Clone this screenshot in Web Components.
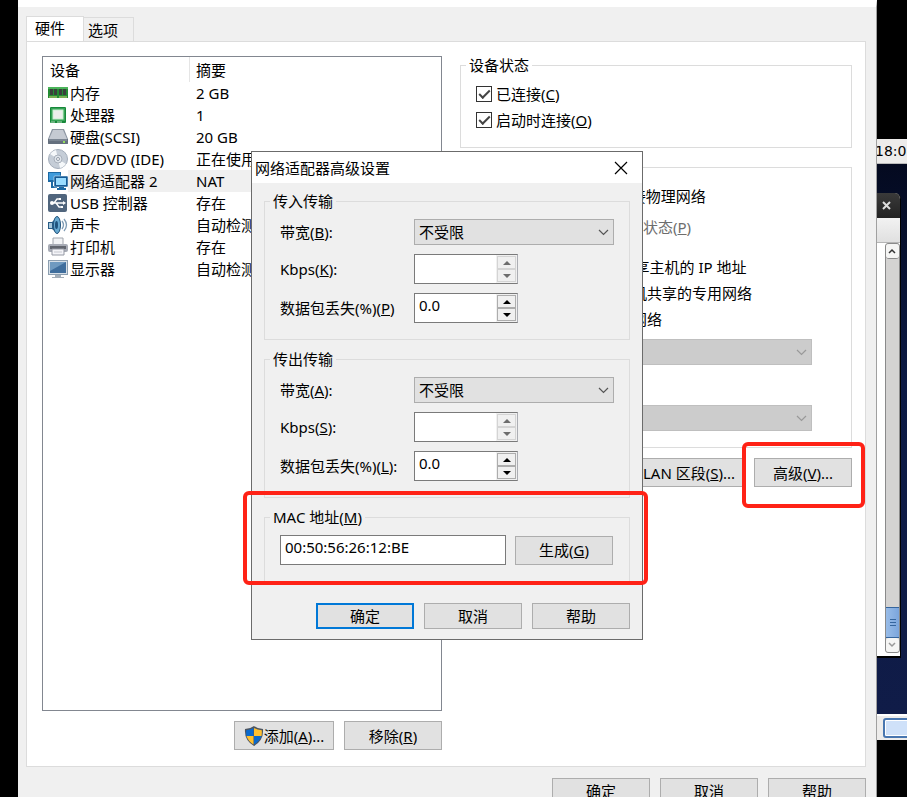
<!DOCTYPE html>
<html lang="zh-CN">
<head>
<meta charset="utf-8">
<title>虚拟机设置</title>
<style>
  html, body { height: 100%; }
  body {
    margin: 0;
    overflow: hidden;
    background: #000;
    color: #000;
    font: 15px/22px "Noto Sans", "Noto Sans CJK SC", sans-serif;
    display: grid;
    grid-template-columns: minmax(0, 1fr) 30px;
    grid-template-rows: 100vh;
    padding-left: 18px;
    box-sizing: border-box;
  }
  /* floats over the settings window */
  advanced-dialog { position: absolute; left: 251px; top: 151px; }
</style>
</head>
<body>
<settings-window></settings-window>
<guest-desktop></guest-desktop>
<advanced-dialog></advanced-dialog>

<script>
class BaseElement extends HTMLElement {
  constructor() {
    super();
    const template = document.createElement("template");
    template.innerHTML = this.constructor.markup;
    this.attachShadow({ mode: "open" });
    this.shadowRoot.appendChild(template.content.cloneNode(true));
  }

  $(selector) {
    return this.shadowRoot.querySelector(selector);
  }
}

class PushButton extends BaseElement {
  static get markup() {
    return `
    <style>
      :host { display: block; width: 98px; height: 29px; }
      button {
        display: flex;
        align-items: center;
        justify-content: center;
        width: 100%;
        height: 100%;
        padding: 0;
        border: 1px solid #adadad;
        background: #e1e1e1;
        color: inherit;
        font: inherit;
        white-space: nowrap;
      }
      :host([default]) button { border: 2px solid #0078d7; }
    </style>
    <button type="button"><slot></slot></button>`;
  }
}
customElements.define("push-button", PushButton);

class GroupBox extends BaseElement {
  static get markup() {
    return `
    <style>
      :host { display: block; position: relative; }
      fieldset {
        margin: 0;
        min-width: 0;
        border: 1px solid #dcdcdc;
        padding: 9px 15px 16px;
      }
      legend { margin-left: -10px; padding: 0 3px; line-height: 18px; }
    </style>
    <fieldset>
      <legend><slot name="legend"></slot></legend>
      <slot></slot>
    </fieldset>`;
  }
}
customElements.define("group-box", GroupBox);

// red frame drawn round the element it sits in
class CalloutFrame extends BaseElement {
  static get markup() {
    return `
    <style>
      :host {
        display: block;
        position: absolute;
        inset: -16px -13px -21px -12px;
        border: 4px solid #ff2216;
        border-radius: 6px;
        pointer-events: none;
        z-index: 2;
      }
      :host([wide]) { inset: -17px -18px -3px -21px; }
    </style>`;
  }
}
customElements.define("callout-frame", CalloutFrame);

class ChoiceRow extends BaseElement {
  static get markup() {
    return `
    <style>
      :host { display: flex; align-items: center; height: 22px; white-space: nowrap; }
      input {
        appearance: none;
        box-sizing: border-box;
        flex: none;
        width: 16px;
        height: 16px;
        margin: 0 4px 0 0;
        border: 1px solid #333;
        background: #fff;
        display: grid;
        place-items: center;
      }
      input[type=radio] { margin-right: 7px; border-radius: 50%; }
      input[type=checkbox]:checked::after {
        content: "";
        box-sizing: border-box;
        width: 11px;
        height: 6px;
        border: solid #444;
        border-width: 0 0 2px 2px;
        transform: translateY(-1px) rotate(-45deg);
      }
      input[type=radio]:checked::after {
        content: "";
        width: 8px;
        height: 8px;
        border-radius: 50%;
        background: #333;
      }
      :host([disabled]) { color: #6d6d6d; }
      :host([disabled]) input { border-color: #ccc; }
    </style>
    <input id="choice"><label for="choice"><slot></slot></label>`;
  }

  connectedCallback() {
    const input = this.$("input");
    input.type = this.getAttribute("type") || "checkbox";
    input.checked = this.hasAttribute("checked");
    input.disabled = this.hasAttribute("disabled");
  }
}
customElements.define("choice-row", ChoiceRow);

class SelectField extends BaseElement {
  static get markup() {
    return `
    <style>
      :host { display: grid; grid-template-columns: 134px minmax(0, 1fr); align-items: center; }
      :host([bare]) { grid-template-columns: minmax(0, 1fr); }
      :host([bare]) label { display: none; }
      .box { display: grid; align-items: center; }
      select, svg { grid-area: 1 / 1; }
      select {
        appearance: none;
        width: 100%;
        height: 26px;
        padding: 0 4px;
        border: 1px solid #adadad;
        border-radius: 0;
        background: #e1e1e1;
        color: inherit;
        font: inherit;
      }
      svg { justify-self: end; margin-right: 5px; pointer-events: none; stroke: #555; }
      select:disabled { background: #ccc; border-color: #bfbfbf; opacity: 1; }
      select:disabled + svg { stroke: #999; }
    </style>
    <label for="select"><slot></slot></label>
    <div class="box">
      <select id="select"><option></option></select>
      <svg width="11" height="7" fill="none" stroke-width="1.2"><path d="M1 1l4.500 4.500L10 1"/></svg>
    </div>`;
  }

  connectedCallback() {
    this.$("option").textContent = this.getAttribute("value") || "";
    this.$("select").disabled = this.hasAttribute("disabled");
    if (this.hasAttribute("bare")) {
      this.$("select").setAttribute("aria-label", this.getAttribute("bare"));
    }
  }
}
customElements.define("select-field", SelectField);

class SpinField extends BaseElement {
  static get markup() {
    return `
    <style>
      :host { display: grid; grid-template-columns: 134px minmax(0, 1fr); align-items: center; }
      label { white-space: nowrap; }
      .box {
        display: grid;
        grid-template-columns: 1fr 21px;
        box-sizing: border-box;
        width: 104px;
        height: 30px;
        border: 1px solid #7a7a7a;
        border-right-color: #abadb3;
        background: #fff;
      }
      input {
        min-width: 0;
        border: 0;
        padding: 0 4px 6px;
        background: none;
        color: inherit;
        font: inherit;
        outline: 0;
      }
      .arrows { display: grid; grid-template-rows: 1fr 1fr; padding: 1px; background: #f0f0f0; }
      button {
        display: grid;
        place-items: center;
        min-height: 0;
        padding: 0;
        border: 1px solid #adadad;
        background: #f0f0f0;
        color: #000;
      }
      button:disabled { border-color: #d4d4d4; color: #6d6d6d; }
      svg { display: block; fill: currentColor; }
    </style>
    <label for="number"><slot></slot></label>
    <div class="box">
      <input id="number" type="text">
      <div class="arrows">
        <button type="button" aria-label="增加"><svg width="8" height="4"><path d="M0 4L4 0l4 4z"/></svg></button>
        <button type="button" aria-label="减少"><svg width="8" height="4"><path d="M0 0l4 4 4-4z"/></svg></button>
      </div>
    </div>`;
  }

  connectedCallback() {
    this.$("input").value = this.getAttribute("value") || "";
    this.shadowRoot.querySelectorAll("input, button").forEach(node => {
      node.disabled = this.hasAttribute("disabled");
    });
  }
}
customElements.define("spin-field", SpinField);

const ICONS = {
  memory: `<path d="M0 4h20v11H0z" fill="#238b33"/><path d="M0 4h20v2H0z" fill="#4bb35a"/>
    <path d="M2 6h3v6H2zM6 6h3v6H6zM11 6h3v6h-3zM15 6h3v6h-3z" fill="#3a403c"/>
    <path d="M1 13h8v2H1zM11 13h8v2h-8z" fill="#d6cf7a"/><path d="M2 13v2m2-2v2m2-2v2m2-2v2m4-2v2m2-2v2m2-2v2m2-2v2" stroke="#238b33"/>`,
  cpu: `<rect x="2" y="2" width="16" height="16" rx="1" fill="#17883a"/><rect x="3" y="3" width="14" height="13" fill="#36a356"/>
    <rect x="5" y="5" width="10" height="9" fill="#eceeec" stroke="#c8f0d0"/><path d="M3 17h4M9 17h5" stroke="#b9dfc0"/>`,
  disk: `<path d="M4 2h12l4 10v5H0v-5z" fill="#8c95a1"/><path d="M5 3h10l4 9H1z" fill="#c5cad2"/>
    <path d="M0 12h20v4q0 1-1 1H1q-1 0-1-1z" fill="#65707e"/><path d="M1 13h18" stroke="#929ba6"/><path d="M16 14v2" stroke="#95e05e" stroke-width="2"/>`,
  disc: `<circle cx="10" cy="10" r="9.500" fill="#c5cdd7" stroke="#a3adba"/><path d="M10 10L2 5a10 10 0 0 1 6-4zM10 10l8 5a10 10 0 0 1-6 4z" fill="#f5f8fa"/>
    <circle cx="10" cy="10" r="4" fill="#dfe5eb" stroke="#a8b0bb"/><circle cx="10" cy="10" r="1.500" fill="#fff" stroke="#929ca9"/>`,
  network: `<path d="M0 1h13v10H0z" fill="#1c69a4"/><path d="M1 2h11v7H1z" fill="#3f9bdb"/><path d="M4 10v6h5" stroke="#1c69a4" stroke-width="2" fill="none"/>
    <rect x="6" y="5" width="14" height="11" rx="1" fill="#155b96" stroke="#fff" stroke-width=".5"/><path d="M8 7h10v7H8z" fill="#9adcff"/><path d="M11 16h5v1h2v2H9v-2h2z" fill="#1c69a4"/>`,
  usb: `<rect x="0" y="1" width="19" height="18" rx="2" fill="#50657d"/><path d="M3 10h13M6 10l3-4h3M8 10l3 4h3" stroke="#fff" stroke-width="1.300" fill="none"/>
    <circle cx="4" cy="10" r="2" fill="#fff"/><path d="M15 8l3 2-3 2zM11 5h2v2h-2zM13 13h2v2h-2z" fill="#fff"/>`,
  sound: `<path d="M0 7h4l6-6v18l-6-5H0z" fill="#285c86"/><path d="M1 8h3v5H1z" fill="#a8c8dc"/><ellipse cx="9" cy="10" rx="3.500" ry="8.500" fill="#67a9d1" stroke="#24557d"/>
    <ellipse cx="8.500" cy="10" rx="1.500" ry="4" fill="#1f527c"/><path d="M14 6q3 4 0 8M16 4q5 6 0 12" stroke="#7f9cb5" stroke-width="1.300" fill="none"/>`,
  printer: `<path d="M5 1h10v7H5z" fill="#f3f4f6" stroke="#a2a6ae"/><rect x="0" y="7" width="20" height="8" rx="2" fill="#a7abb5"/>
    <path d="M2 9h16v3H2z" fill="#62666f"/><path d="M4 12h12v6H4z" fill="#f4f4f8" stroke="#9599a4"/><path d="M6 15h8" stroke="#c6c8cf"/>`,
  display: `<path d="M0 1h20v15H0z" fill="#8b9eb0"/><path d="M1 2h18v13H1z" fill="#d7e0e8"/><path d="M2 3h16v11H2z" fill="#3f6e9d"/>
    <path d="M2 3h16L2 12z" fill="#6f9ac0"/><path d="M7 16h6v2h3v1H4v-1h3z" fill="#a2adb8"/>`
};

const DEVICES = [
  ["memory", "内存", "2 GB"],
  ["cpu", "处理器", "1"],
  ["disk", "硬盘(SCSI)", "20 GB"],
  ["disc", "CD/DVD (IDE)", "正在使用"],
  ["network", "网络适配器 2", "NAT"],
  ["usb", "USB 控制器", "存在"],
  ["sound", "声卡", "自动检测"],
  ["printer", "打印机", "存在"],
  ["display", "显示器", "自动检测"]
];

class DeviceList extends BaseElement {
  static get markup() {
    return `
    <style>
      :host { display: block; border: 1px solid #828790; background: #fff; padding-left: 5px; }
      table { width: 100%; border-collapse: collapse; table-layout: fixed; }
      th { height: 25px; padding: 0 0 0 6px; text-align: left; font-weight: 400; }
      th:first-child { padding-left: 2px; background: linear-gradient(#e5e5e5, #e5e5e5) right / 1px 100% no-repeat; }
      td { height: 22px; padding: 0; white-space: nowrap; overflow: hidden; }
      td:last-child { padding-left: 6px; }
      td.name { padding-left: 2px; }
      .selected td:not(.icon) { background: #f0f0f0; }
      svg { display: block; }
    </style>
    <table>
      <colgroup><col style="width:20px"><col style="width:122px"><col></colgroup>
      <thead><tr><th colspan="2">设备</th><th>摘要</th></tr></thead>
      <tbody></tbody>
    </table>`;
  }

  connectedCallback() {
    this.$("tbody").innerHTML = DEVICES.map(([icon, name, summary]) => `
      <tr class="${icon === "network" ? "selected" : ""}">
        <td class="icon"><svg width="20" height="20" viewBox="0 0 20 20">${ICONS[icon]}</svg></td>
        <td class="name">${name}</td>
        <td>${summary}</td>
      </tr>`).join("");
  }
}
customElements.define("device-list", DeviceList);

class SettingsWindow extends BaseElement {
  static get markup() {
    return `
    <style>
      /* the button bar runs off the bottom of the screen */
      :host {
        display: flex;
        flex-direction: column;
        box-sizing: border-box;
        height: calc(100vh + 21px);
        padding: 9px 10px 14px 8px;
        border-top: 7px solid #fff;
        border-right: 1px solid #a0a0a0;
        background: #f0f0f0;
      }
      .tabs { display: flex; align-items: flex-end; margin-bottom: -1px; }
      .tabs button {
        box-sizing: border-box;
        height: 24px;
        margin-bottom: 1px;
        padding: 0 15px 0 4px;
        border: 1px solid #dcdcdc;
        border-left: 0;
        border-bottom: 0;
        background: #f0f0f0;
        color: inherit;
        font: inherit;
        line-height: 22px;
      }
      .tabs .active {
        height: 26px;
        margin-bottom: 0;
        padding: 0 18px 4px 8px;
        border-left: 1px solid #dcdcdc;
        background: #fff;
      }
      .page {
        flex: 1;
        display: grid;
        grid-template-columns: minmax(0, 400fr) minmax(0, 392fr);
        gap: 18px;
        padding: 14px 13px 16px 15px;
        border: 1px solid #dcdcdc;
        background: #fff;
      }
      .left, .right, .stack { display: flex; flex-direction: column; }
      .left, .right { gap: 10px; }
      device-list { flex: 1; }
      .buttons { display: flex; justify-content: flex-end; gap: 10px; }
      .add { width: 100px; }
      .segments { width: 110px; }
      .advanced { position: relative; }
      .stack { gap: 4px; }
      .hosted { margin-top: 18px; }
      .bridged, .custom { gap: 9px; }
      .custom { margin: 9px 24px 0 38px; }
      .custom choice-row { margin-left: -38px; }
      .sub { margin-left: 27px; }
      .footer { display: flex; justify-content: flex-end; gap: 10px; padding-top: 11px; }
      .footer push-button { height: 26px; }
    </style>
    <div class="tabs" role="tablist">
      <button type="button" role="tab" class="active" aria-selected="true">硬件</button>
      <button type="button" role="tab">选项</button>
    </div>
    <div class="page">
      <div class="left">
        <device-list></device-list>
        <div class="buttons">
          <push-button class="add">
            <svg width="20" height="20" viewBox="0 0 20 20">
              <path d="M10 0Q14 3 19 3Q20 14 10 20Q0 14 1 3Q6 3 10 0z" fill="#4d5560"/>
              <path d="M9.500 2v8H2.500Q2 7 2.200 4.300Q6 4 9.500 2zM10 10h7.500Q16 15 10 18.500z" fill="#0a69cd"/>
              <path d="M10 2q3.500 2 7.800 2.300Q18 7 17.500 10H10zM2.500 10h7v8.500Q4 15 2.500 10z" fill="#ffc02f"/>
            </svg>添加(<u>A</u>)...</push-button>
          <push-button>移除(<u>R</u>)</push-button>
        </div>
      </div>
      <div class="right">
        <group-box>
          <span slot="legend">设备状态</span>
          <div class="stack">
            <choice-row checked>已连接(<u>C</u>)</choice-row>
            <choice-row checked>启动时连接(<u>O</u>)</choice-row>
          </div>
        </group-box>
        <group-box>
          <span slot="legend">网络连接</span>
          <div class="stack bridged">
            <choice-row type="radio">桥接模式(<u>B</u>): 直接连接物理网络</choice-row>
            <choice-row class="sub" disabled>复制物理网络连接状态(<u>P</u>)</choice-row>
          </div>
          <div class="stack hosted">
            <choice-row type="radio" checked>NAT 模式(<u>N</u>): 用于共享主机的 IP 地址</choice-row>
            <choice-row type="radio">仅主机模式(<u>H</u>): 与主机共享的专用网络</choice-row>
            <choice-row type="radio">自定义(<u>U</u>): 特定虚拟网络</choice-row>
          </div>
          <div class="stack custom">
            <select-field bare="特定虚拟网络" disabled></select-field>
            <choice-row type="radio">LAN 区段(<u>L</u>):</choice-row>
            <select-field bare="LAN 区段" disabled></select-field>
          </div>
        </group-box>
        <div class="buttons">
          <push-button class="segments">LAN 区段(<u>S</u>)...</push-button>
          <push-button class="advanced">高级(<u>V</u>)...</push-button>
        </div>
      </div>
    </div>
    <div class="footer">
      <push-button>确定</push-button>
      <push-button>取消</push-button>
      <push-button>帮助</push-button>
    </div>`;
  }

  connectedCallback() {
    const frame = document.createElement("callout-frame");
    this.$(".advanced").shadowRoot.appendChild(frame);
  }
}
customElements.define("settings-window", SettingsWindow);

class AdvancedDialog extends BaseElement {
  static get markup() {
    return `
    <style>
      :host {
        display: block;
        box-sizing: border-box;
        width: 392px;
        border: 1px solid #6b6b6b;
        background: #f0f0f0;
      }
      header {
        display: flex;
        align-items: center;
        justify-content: space-between;
        height: 31px;
        padding: 0 14px 0 3px;
        background: #fff;
      }
      header button { padding: 0; border: 0; background: none; }
      header svg { display: block; stroke: #000; }
      .body { display: flex; flex-direction: column; gap: 10px; padding: 9px 12px 10px; }
      .fields { display: grid; gap: 9px; }
      .mac { display: flex; align-items: center; gap: 9px; padding-right: 1px; }
      .mac input {
        box-sizing: border-box;
        flex: 1;
        min-width: 0;
        height: 30px;
        padding: 0 4px 6px;
        border: 1px solid #7a7a7a;
        background: #fff;
        font: inherit;
      }
      footer { display: flex; justify-content: flex-end; gap: 10px; padding-top: 11px; }
      footer push-button { height: 26px; }
    </style>
    <header>
      <span>网络适配器高级设置</span>
      <button type="button" aria-label="关闭"><svg width="14" height="14" stroke-width="1.200"><path d="M1 1l12 12M13 1L1 13"/></svg></button>
    </header>
    <div class="body">
      <group-box>
        <span slot="legend">传入传输</span>
        <div class="fields">
          <select-field value="不受限">带宽(<u>B</u>):</select-field>
          <spin-field disabled>Kbps(<u>K</u>):</spin-field>
          <spin-field value="0.0">数据包丢失(%)(<u>P</u>)</spin-field>
        </div>
      </group-box>
      <group-box>
        <span slot="legend">传出传输</span>
        <div class="fields">
          <select-field value="不受限">带宽(<u>A</u>):</select-field>
          <spin-field disabled>Kbps(<u>S</u>):</spin-field>
          <spin-field value="0.0">数据包丢失(%)(<u>L</u>):</spin-field>
        </div>
      </group-box>
      <group-box>
        <label slot="legend" for="mac">MAC 地址(<u>M</u>)</label>
        <div class="mac">
          <input id="mac" type="text" value="00:50:56:26:12:BE">
          <push-button>生成(<u>G</u>)</push-button>
        </div>
        <callout-frame wide></callout-frame>
      </group-box>
      <footer>
        <push-button default>确定</push-button>
        <push-button>取消</push-button>
        <push-button>帮助</push-button>
      </footer>
    </div>`;
  }
}
customElements.define("advanced-dialog", AdvancedDialog);

// the strip of the guest's desktop left visible beside the settings
class GuestDesktop extends BaseElement {
  static get markup() {
    return `
    <style>
      :host { display: block; overflow: hidden; padding-top: 139px; }
      .clock {
        height: 24px;
        border-bottom: 1px solid #bbb;
        background: #edeceb;
        font-family: "DejaVu Sans", sans-serif;
        font-size: 14px;
        line-height: 24px;
        text-indent: -2px;
        white-space: nowrap;
      }
      .wallpaper { box-sizing: border-box; height: 550px; padding: 29px 6px 0 0; background: linear-gradient(#040a20, #0b1944 40%, #101c48); }
      .window { border-right: 1px solid #000; border-bottom: 2px solid #000; border-radius: 0 6px 0 0; overflow: hidden; background: #fff; }
      .title { display: grid; place-items: center; height: 25px; padding-right: 4px; background: linear-gradient(#3a3a3a, #222); }
      .menu { height: 24px; border-bottom: 1px solid #b5b5b5; background: linear-gradient(#f2f2f2, #e0e0e0); }
      .scroll {
        display: flex;
        flex-direction: column;
        box-sizing: border-box;
        height: 410px;
        margin: 0 0 3px 8px;
        border: 1px solid #8a8a8a;
        border-radius: 3px;
        background: #d4d3d2;
      }
      .arrow { display: grid; place-items: center; height: 14px; background: #f5f5f4; border-bottom: 1px solid #8a8a8a; border-radius: 3px; }
      .thumb { display: grid; place-items: center; height: 29px; margin-top: auto; border-top: 1px solid #35659e; border-bottom: 1px solid #35659e; background: linear-gradient(90deg, #98bce8, #7ba5dc); }
      .down { border-bottom: 0; }
      svg { display: block; fill: none; stroke: #333; stroke-width: 1.500; }
      .panel { display: flex; align-items: center; box-sizing: border-box; height: 26px; padding-left: 6px; border-top: 2px solid #fff; background: #edeceb; }
      .task { box-sizing: border-box; flex: none; width: 28px; height: 20px; border: 2px solid #4876b0; border-radius: 3px; background: #cfe1f9; box-shadow: inset 0 0 0 1px #fff; }
    </style>
    <div class="clock">18:0</div>
    <div class="wallpaper">
      <div class="window">
        <div class="title"><svg width="10" height="10" style="stroke:#ddd;stroke-width:2"><path d="M1 1l7 7M8 1L1 8"/></svg></div>
        <div class="menu"></div>
        <div class="scroll">
          <div class="arrow"><svg width="9" height="6"><path d="M1 5l3-3 3 3"/></svg></div>
          <div class="thumb"><svg width="7" height="9" style="stroke:#35659e;stroke-width:1"><path d="M1 1.500h6M1 4.500h6M1 7.500h6"/></svg></div>
          <div class="arrow down"><svg width="9" height="6" style="stroke:#999"><path d="M1 1l3 3 3-3"/></svg></div>
        </div>
      </div>
    </div>
    <div class="panel"><div class="task"></div></div>`;
  }
}
customElements.define("guest-desktop", GuestDesktop);
</script>
</body>
</html>
